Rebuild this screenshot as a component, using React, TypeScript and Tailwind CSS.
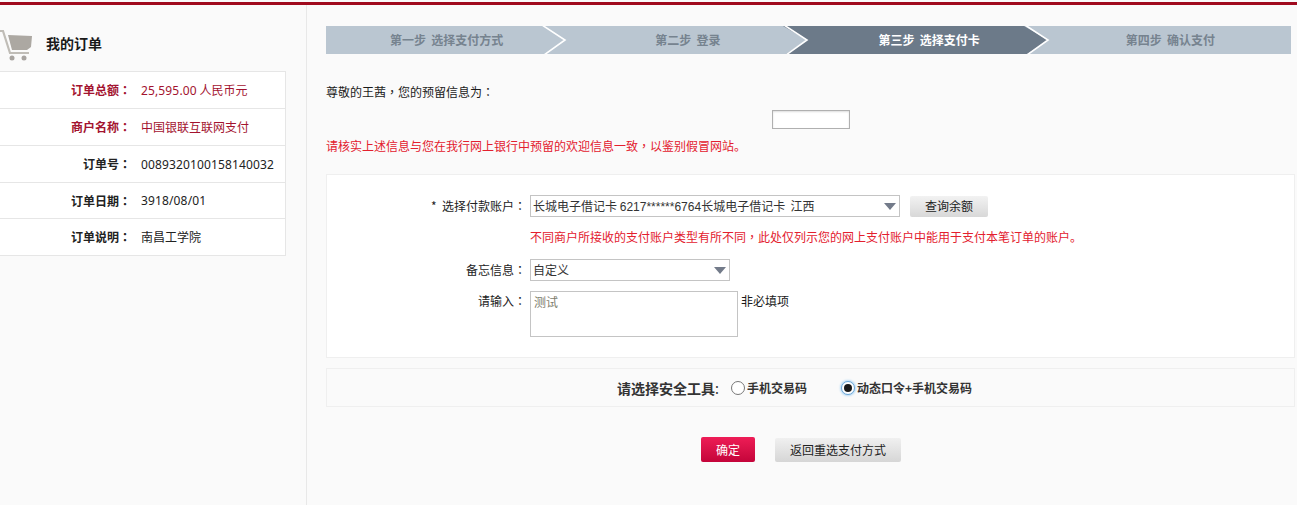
const cjk = "font-['Microsoft_YaHei','Noto_Sans_CJK_SC','Noto_Sans',sans-serif]";

function Num({ children }: { children: React.ReactNode }) {
  return <span className="font-['Noto_Sans',sans-serif] tracking-[0.14px]">{children}</span>;
}

function Card({ children }: { children: React.ReactNode }) {
  return <span className="font-['Liberation_Sans',sans-serif]">{children}</span>;
}

function P({ children }: { children: React.ReactNode }) {
  return <span className="font-['Noto_Sans_CJK_TC',sans-serif]">{children}</span>;
}

function Row({ label, value, red, last, short }: { label: string; value: React.ReactNode; red?: boolean; last?: boolean; short?: boolean }) {
  return (
    <div className={`flex items-center whitespace-nowrap ${short ? "h-[36px]" : "h-[37px]"} ${last ? "" : "border-b border-[#e6e6e6]"}`}>
      <div className={`w-[131px] text-right font-bold ${red ? "text-[#a3132f]" : "text-[#222222]"}`}>{label}<P>：</P></div>
      <div className={`ml-[10px] ${red ? "text-[#a3132f]" : "text-[#222222]"}`}>{value}</div>
    </div>
  );
}

function Chevron({ left, right }: { left: string; right: string }) {
  return (
    <svg className="absolute right-0 top-0 z-10" width="26" height="28" viewBox="0 0 26 28">
      <polygon points="0,0 24,14 3,28 0,28" fill={left} />
      <polygon points="0,0 26,0 26,28 3,28 24,14" fill={right} />
      <polyline points="1,-1 24,14 3,29" fill="none" stroke="#ffffff" strokeWidth="1.6" />
    </svg>
  );
}

function Step({ text, active, left, right }: { text: string; active?: boolean; left?: string; right?: string }) {
  return (
    <div className={`relative flex items-center justify-center whitespace-pre font-bold ${active ? "bg-[#6c7a89] text-white" : "bg-[#bac6d1] text-[#76838f]"}`}>
      <span className="relative z-20">{text}</span>
      {left && right ? <Chevron left={left} right={right} /> : null}
    </div>
  );
}

function Caret() {
  return <span className="h-0 w-0 border-x-[6px] border-t-[7px] border-x-transparent border-t-[#737b8a]" />;
}

function Radio({ checked }: { checked?: boolean }) {
  return (
    <span className={`flex h-[14px] w-[14px] items-center justify-center rounded-full border bg-white ${checked ? "border-[#6aa5d6] shadow-[0_0_2px_1px_#b5d9f3]" : "border-[#777777]"}`}>
      {checked ? <span className="h-[8px] w-[8px] rounded-full bg-[#1a1a1a]" /> : null}
    </span>
  );
}

export default function App() {
  return (
    <div className={`flex h-[505px] w-[1297px] flex-col overflow-hidden bg-[#fafafa] text-[12px] leading-[18px] text-[#222222] ${cjk}`}>
      <div className="mt-[2px] h-[3px] shrink-0 bg-[#a00a1e]" />
      <div className="flex min-h-0 flex-1">
        <aside className="w-[307px] shrink-0 border-r border-[#e8e8e8]">
          <div className="flex h-[66px] items-start">
            <svg className="mt-[22px]" width="33" height="35" viewBox="0 0 33 35">
              <path d="M-1 4 L3 4 L10 26 L29 26" fill="none" stroke="#c0bdb7" strokeWidth="2.2" />
              <path d="M8 8 L32 9 L31 20 L27 23 L12 23 Z" fill="#aca8a2" />
              <circle cx="12" cy="31" r="2.5" fill="#a8a4a0" />
              <circle cx="24" cy="31" r="2.5" fill="#a8a4a0" />
            </svg>
            <h1 className="ml-[13px] mt-[29px] text-[14px] font-bold text-[#1a1a1a]">我的订单</h1>
          </div>
          <div className="w-[286px] border border-l-0 border-[#e6e6e6] bg-white">
            <Row red label="订单总额" value={<><Num>25,595.00</Num> 人民币元</>} />
            <Row red label="商户名称" value="中国银联互联网支付" />
            <Row label="订单号" value={<Num>0089320100158140032</Num>} />
            <Row short label="订单日期" value={<Num>3918/08/01</Num>} />
            <Row short last label="订单说明" value="南昌工学院" />
          </div>
        </aside>

        <main className="min-w-0 flex-1 pl-[19px]">
          <div className="mt-[21px] grid h-[28px] w-[965px] grid-cols-4">
            <Step text="第一步  选择支付方式" left="#bac6d1" right="#bac6d1" />
            <Step text="第二步  登录" left="#bac6d1" right="#6c7a89" />
            <Step text="第三步  选择支付卡" active left="#6c7a89" right="#bac6d1" />
            <Step text="第四步  确认支付" />
          </div>

          <p className="mt-[29px] text-[#1a1a1a]">尊敬的王茜<P>，</P>您的预留信息为<P>：</P></p>
          <div className="ml-[446px] mt-[9px] h-[19px] w-[78px] border border-[#b0b0b0] bg-white shadow-[inset_0_1px_2px_#dddddd]" />
          <p className="mt-[8px] text-[#e3202e]">请核实上述信息与您在我行网上银行中预留的欢迎信息一致<P>，</P>以鉴别假冒网站。</p>

          <section className="mt-[19px] h-[184px] w-[969px] border border-[#efefef] bg-white pt-[20px]">
            <div className="flex h-[22px] items-center">
              <label className="w-[199px] whitespace-pre text-right">*  选择付款账户<P>：</P></label>
              <div className="ml-[4px] flex h-[22px] w-[370px] items-center justify-between border border-[#c4c4c4] bg-white pl-[2px] pr-[3px] text-[#333333]">
                <span className="whitespace-pre">长城电子借记卡 <Card>6217******6764</Card>长城电子借记卡  江西</span>
                <Caret />
              </div>
              <button className="ml-[10px] h-[21px] w-[78px] rounded-[2px] bg-gradient-to-b from-[#f2f2f2] to-[#d8d8d8] text-[#222222]">查询余额</button>
            </div>
            <p className="ml-[203px] mt-[11px] text-[#e3202e]">不同商户所接收的支付账户类型有所不同<P>，</P>此处仅列示您的网上支付账户中能用于支付本笔订单的账户。</p>
            <div className="mt-[13px] flex h-[22px] items-center">
              <label className="w-[199px] text-right">备忘信息<P>：</P></label>
              <div className="ml-[4px] flex h-[22px] w-[200px] items-center justify-between border border-[#c4c4c4] bg-white pl-[2px] pr-[3px] text-[#333333]">
                <span>自定义</span>
                <Caret />
              </div>
            </div>
            <div className="mt-[10px] flex items-start">
              <label className="w-[199px] pt-[1px] text-right">请输入<P>：</P></label>
              <div className="ml-[4px] h-[46px] w-[208px] border border-[#c4c4c4] bg-white px-[3px] pt-[1px] text-[#7d7d6d]">测试</div>
              <span className="ml-[3px] pt-[1px] text-[#1a1a1a]">非必填项</span>
            </div>
          </section>

          <section className="mt-[10px] flex h-[39px] w-[969px] items-center border border-[#efefef] bg-[#fafafa] pl-[290px] text-[#333333]">
            <span className="text-[14px] font-bold">请选择安全工具<span className="font-normal">:</span></span>
            <span className="ml-[12px]"><Radio /></span>
            <span className="ml-[2px] font-bold">手机交易码</span>
            <span className="ml-[34px]"><Radio checked /></span>
            <span className="ml-[2px] font-bold">动态口令+手机交易码</span>
          </section>

          <div className="mt-[30px] flex items-center pl-[375px]">
            <button className="h-[25px] w-[54px] rounded-[2px] bg-gradient-to-b from-[#ee1c56] to-[#c4043a] text-white">确定</button>
            <button className="ml-[20px] h-[24px] w-[126px] rounded-[2px] bg-gradient-to-b from-[#f0f0f0] to-[#d6d6d6] text-[#222222]">返回重选支付方式</button>
          </div>
        </main>
      </div>
    </div>
  );
}
